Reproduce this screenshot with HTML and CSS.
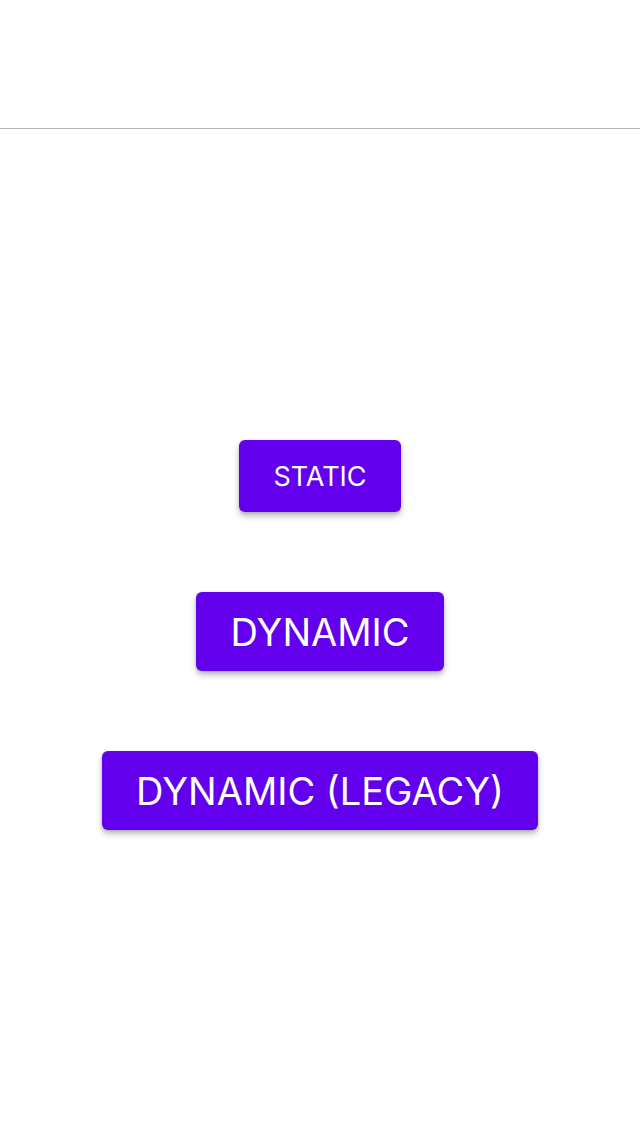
FILE: index.html
```html
<!DOCTYPE html>
<html lang="en">
<head>
    <meta charset="UTF-8">
    <meta name="viewport" content="width=device-width, initial-scale=1.0">
    <title>Buttons</title>
    <link rel="stylesheet" href="styles.css">
</head>
<body>
    <div class="toolbar"></div>
    <main class="content">
        <button class="btn btn-static">STATIC</button>
        <button class="btn btn-dynamic">DYNAMIC</button>
        <button class="btn btn-dynamic">DYNAMIC (LEGACY)</button>
    </main>
</body>
</html>
```

FILE: styles.css
```css
html, body{
    margin:0;
    height:100%;
    background:#fff;
}
body{
    display:flex;
    flex-direction:column;
    font-family:Inter, "Liberation Sans", sans-serif;
}
.toolbar{
    height:129px;
    border-bottom:1px solid #b4b4b4;
    box-sizing:border-box;
    flex:none;
}
.content{
    flex:1;
    display:flex;
    flex-direction:column;
    align-items:center;
    justify-content:center;
    gap:80px;
    padding-top:5px;
}
.btn{
    border:none;
    background:#6200ee;
    color:#fff;
    border-radius:6px;
    box-shadow:0 4px 6px rgba(0,0,0,0.25), 0 1px 3px rgba(0,0,0,0.15);
    font-family:Inter, "Liberation Sans", sans-serif;
    padding:0 34px;
    cursor:pointer;
}
.btn-static{
    height:72px;
    font-size:27px;
    font-weight:400;
}
.btn-dynamic{
    height:79px;
    font-size:38px;
    font-weight:400;
}
```
